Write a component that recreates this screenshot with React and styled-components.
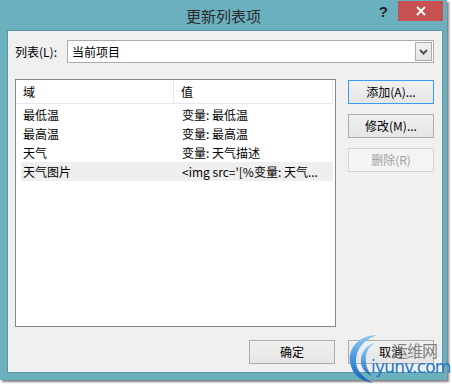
import React from "react";
import styled, { createGlobalStyle } from "styled-components";

const Global = createGlobalStyle`
  html, body { margin: 0; padding: 0; background: #ffffff; }
  body {
    font-family: "Noto Sans CJK SC", "Noto Sans", sans-serif;
    font-size: 12px;
    color: #000;
  }
`;

const Stage = styled.div`
  width: 452px;
  height: 384px;
  position: relative;
  overflow: hidden;
  background: #ffffff;
`;

const Window = styled.div`
  width: 447px;
  height: 380px;
  background: #6bb0be;
  display: flex;
  flex-direction: column;
  box-shadow: 2px 2px 2px rgba(0, 0, 0, 0.5);
`;

const TitleBar = styled.div`
  height: 30px;
  display: grid;
  grid-template-columns: 1fr auto 1fr;
  align-items: start;
`;

const Title = styled.div`
  grid-column: 2;
  padding-top: 7px;
  font-size: 15px;
  line-height: 18px;
  color: #2b2b2b;
`;

const Controls = styled.div`
  grid-column: 3;
  justify-self: end;
  display: flex;
  align-items: flex-start;
`;

const Help = styled.div`
  font-family: "Liberation Sans", sans-serif;
  font-weight: bold;
  font-size: 15px;
  line-height: 16px;
  color: #222;
  margin-top: 4px;
  margin-right: 10px;
`;

const Close = styled.div`
  width: 45px;
  height: 20px;
  margin-top: 1px;
  margin-right: 4px;
  background: #c75050;
  display: flex;
  align-items: center;
  justify-content: center;
`;

const Client = styled.div`
  flex: 1;
  margin: 0 4px 7px 7px;
  border: 1px solid #5895a2;
  background: #f0f0f0;
  padding: 9px 8px 8px 7px;
  display: flex;
  flex-direction: column;
`;

const FieldRow = styled.div`
  display: flex;
  align-items: center;
  height: 23px;
`;

const Label = styled.div`
  width: 52px;
  line-height: 16px;
`;

const Combo = styled.div`
  flex: 1;
  height: 23px;
  box-sizing: border-box;
  border: 1px solid #ababab;
  background: #fff;
  display: flex;
  align-items: center;
  padding: 1px 1px 1px 4px;
`;

const ComboText = styled.div`
  flex: 1;
  line-height: 16px;
`;

const DropButton = styled.div`
  width: 17px;
  height: 19px;
  box-sizing: border-box;
  border: 1px solid #acacac;
  background: linear-gradient(#f0f0f0, #e5e5e5);
  display: flex;
  align-items: center;
  justify-content: center;
`;

const Main = styled.div`
  display: flex;
  gap: 12px;
  margin-top: 16px;
  height: 248px;
`;

const ListBox = styled.div`
  flex: 1;
  box-sizing: border-box;
  border: 1px solid #828790;
  background: #fff;
  display: flex;
  flex-direction: column;
`;

const Header = styled.div`
  display: grid;
  grid-template-columns: 158px 159px;
  height: 24px;
  box-sizing: border-box;
  border-bottom: 1px solid #e3e9f1;
  width: 317px;
`;

const HeaderCell = styled.div`
  display: flex;
  align-items: center;
  padding-left: ${(p) => p.$pad}px;
  border-right: 1px solid #e3e9f1;
  line-height: 16px;
`;

const Rows = styled.div`
  margin-top: 1px;
  margin-left: 5px;
  width: 312px;
  display: flex;
  flex-direction: column;
`;

const Row = styled.div`
  display: grid;
  grid-template-columns: 153px 1fr;
  height: 19px;
  align-items: center;
  background: ${(p) => (p.$selected ? "#efefef" : "transparent")};
`;

const Cell = styled.div`
  padding-left: ${(p) => p.$pad}px;
  line-height: 16px;
  white-space: nowrap;
  overflow: hidden;
`;

const SideButtons = styled.div`
  display: flex;
  flex-direction: column;
  gap: 10px;
  padding-top: 1px;
`;

const Button = styled.div`
  width: 86px;
  height: 24px;
  box-sizing: border-box;
  border: 1px solid
    ${(p) => (p.$default ? "#3c9bf0" : p.$disabled ? "#d5d5d5" : "#acacac")};
  background: ${(p) =>
    p.$disabled ? "#f4f4f4" : "linear-gradient(#f0f0f0, #e5e5e5)"};
  color: ${(p) => (p.$disabled ? "#a0a0a0" : "#000")};
  display: flex;
  align-items: center;
  justify-content: center;
  line-height: 16px;
`;

const Footer = styled.div`
  margin-top: 13px;
  display: flex;
  justify-content: flex-end;
  gap: 13px;
`;

const Watermark = styled.div`
  position: absolute;
  left: 348px;
  top: 332px;
  width: 104px;
  height: 52px;
  pointer-events: none;
`;

const WmSwirl = styled.svg`
  position: absolute;
  left: 0;
  top: 0;
`;

const WmCn = styled.div`
  position: absolute;
  left: 44px;
  top: 9px;
  font-size: 16px;
  line-height: 18px;
  color: rgba(100, 100, 100, 0.8);
  letter-spacing: -1px;
`;

const WmEn = styled.div`
  position: absolute;
  left: 23px;
  top: 25px;
  font-family: "DejaVu Sans", sans-serif;
  font-size: 17px;
  line-height: 20px;
  color: #2178cc;
  letter-spacing: -0.8px;
`;

const items = [
  ["最低温", "变量: 最低温"],
  ["最高温", "变量: 最高温"],
  ["天气", "变量: 天气描述"],
  ["天气图片", "<img src='[%变量: 天气..."],
];

export default function App() {
  return (
    <Stage>
      <Global />
      <Window>
        <TitleBar>
          <Title>更新列表项</Title>
          <Controls>
            <Help>?</Help>
            <Close>
              <svg width="10" height="10" viewBox="0 0 10 10">
                <path d="M1 1 L9 9 M9 1 L1 9" stroke="#fff" strokeWidth="2" />
              </svg>
            </Close>
          </Controls>
        </TitleBar>
        <Client>
          <FieldRow>
            <Label>列表(L):</Label>
            <Combo>
              <ComboText>当前项目</ComboText>
              <DropButton>
                <svg width="9" height="6" viewBox="0 0 9 6">
                  <path d="M1 1 L4.5 4.5 L8 1" stroke="#505050" strokeWidth="2" fill="none" />
                </svg>
              </DropButton>
            </Combo>
          </FieldRow>
          <Main>
            <ListBox>
              <Header>
                <HeaderCell $pad={7}>域</HeaderCell>
                <HeaderCell $pad={7}>值</HeaderCell>
              </Header>
              <Rows>
                {items.map(([a, b], i) => (
                  <Row key={a} $selected={i === 3}>
                    <Cell $pad={2}>{a}</Cell>
                    <Cell $pad={8}>{b}</Cell>
                  </Row>
                ))}
              </Rows>
            </ListBox>
            <SideButtons>
              <Button $default>添加(A)...</Button>
              <Button>修改(M)...</Button>
              <Button $disabled>删除(R)</Button>
            </SideButtons>
          </Main>
          <Footer>
            <Button>确定</Button>
            <Button>取消</Button>
          </Footer>
        </Client>
      </Window>
      <Watermark>
        <WmSwirl width="34" height="52" viewBox="0 0 34 52">
          <defs>
            <linearGradient id="wmg" x1="0" y1="0" x2="0" y2="1">
              <stop offset="0" stopColor="#8cc8f0" />
              <stop offset="0.6" stopColor="#3a8ad8" />
              <stop offset="1" stopColor="#155fb4" />
            </linearGradient>
          </defs>
          <path d="M30 3 C11 3 0 16 2 30 C4 43 13 49 25 51 C14 45 7 37 8 27 C9 14 19 6 30 3 Z" fill="url(#wmg)" />
          <path d="M27 11 C17 13 12 22 13 31 C14 38 19 42 24 44 C19 38 17 31 18 24 C19 18 22 14 27 11 Z" fill="url(#wmg)" opacity="0.85" />
        </WmSwirl>
        <WmCn>运维网</WmCn>
        <WmEn>iyunv.com</WmEn>
      </Watermark>
    </Stage>
  );
}
